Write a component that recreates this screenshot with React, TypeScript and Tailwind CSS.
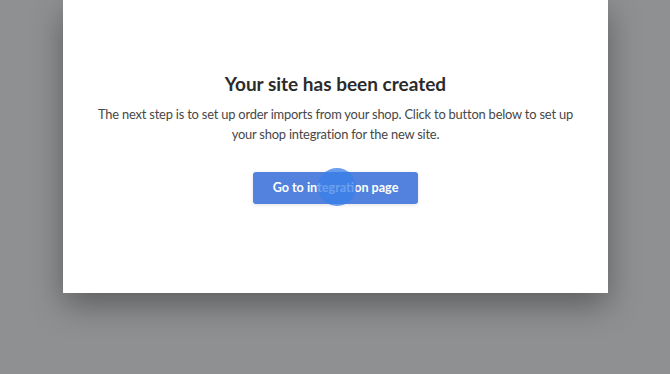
import React from "react";

export default function App() {
  return (
    <div
      className="w-[670px] h-[374px] bg-[#8f9092] overflow-hidden"
      style={{ fontFamily: "Lato, 'Open Sans', Arial, sans-serif" }}
    >
      <div className="ml-[63px] w-[545px] h-[293px] bg-white shadow-[0_12px_30px_rgba(0,0,0,0.35)] flex flex-col items-center">
        <h1 className="mt-[72px] text-[19px] leading-[24px] font-bold text-[#2b2b2b]">
          Your site has been created
        </h1>
        <p className="mt-[8px] whitespace-nowrap text-center text-[12.9px] tracking-[-0.2px] leading-[20px] text-[#474747]">
          The next step is to set up order imports from your shop. Click to button below to set up
          <br />
          your shop integration for the new site.
        </p>
        <div className="relative mt-[28px]">
          <button className="w-[165px] h-[32px] rounded-[3px] bg-[#5282de] text-white text-[12.6px] font-bold shadow-[0_1px_4px_rgba(0,0,0,0.12)]">
            Go to integration page
          </button>
          <span className="absolute left-[65px] top-[-4px] w-[38px] h-[38px] rounded-full bg-[#3a7fe8]/75 pointer-events-none" />
        </div>
      </div>
    </div>
  );
}
